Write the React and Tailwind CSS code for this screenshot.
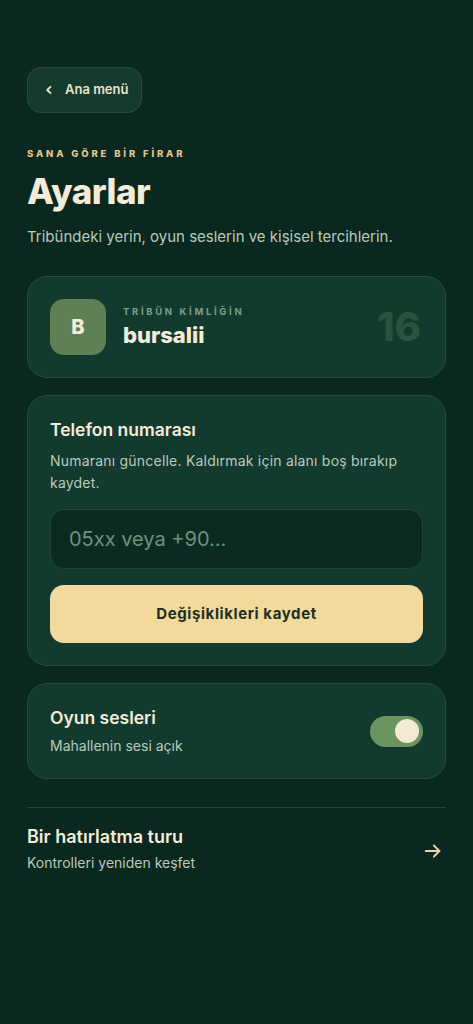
import React from "react";

export default function App() {
  return (
    <div className="min-h-[1024px] w-full bg-[#0a2820] px-[27px] pt-[67px] pb-10" style={{ fontFamily: "Inter, 'Noto Sans', sans-serif" }}>
      <button className="flex h-[46px] w-[115px] items-center gap-[11px] rounded-[14px] border border-[#2a4c3e] bg-[#153a2e] pl-[16px] text-[13px] font-semibold text-[#e9e2c8]">
        <svg width="10" height="10" viewBox="0 0 10 10" fill="none" stroke="#e9e2c8" strokeWidth="1.8" strokeLinecap="round" strokeLinejoin="round">
          <path d="M6.5 1.8 L3.2 5 L6.5 8.2" />
        </svg>
        Ana menü
      </button>

      <div className="mt-[34px] text-[9.5px] font-extrabold tracking-[0.3em] text-[#e3c688]">SANA GÖRE BİR FİRAR</div>
      <h1 className="mt-[8px] text-[35px] font-extrabold leading-[44px] tracking-[-0.015em] text-[#f3ecd9]">Ayarlar</h1>
      <p className="mt-[14px] text-[15px] leading-[20px] text-[#b9cabb]">Tribündeki yerin, oyun seslerin ve kişisel tercihlerin.</p>

      <div className="mt-[29px] flex h-[102px] items-center rounded-[20px] border border-[#2a4c3e] bg-[#133a2e] pl-[22px] pr-[24px]">
        <div className="flex h-[56px] w-[56px] items-center justify-center rounded-[14px] bg-[#5f7f55] text-[20px] font-extrabold text-[#f3ecd9]">B</div>
        <div className="ml-[17px] flex-1">
          <div className="text-[9.5px] font-bold tracking-[0.28em] text-[#7d9e89]">TRİBÜN KİMLİĞİN</div>
          <div className="mt-[2px] text-[22px] font-extrabold leading-[28px] text-[#f3ecd9]">bursalii</div>
        </div>
        <div className="text-[40px] font-extrabold text-[#2b5140]">16</div>
      </div>

      <div className="mt-[17px] rounded-[20px] border border-[#2a4c3e] bg-[#133a2e] px-[22px] pt-[22px] pb-[22px]">
        <div className="text-[17.5px] font-semibold leading-[24px] text-[#f3ecd9]">Telefon numarası</div>
        <p className="mt-[8px] text-[14px] leading-[22px] tracking-[0.015em] text-[#b9cabb]">Numaranı güncelle. Kaldırmak için alanı boş bırakıp kaydet.</p>
        <div className="mt-[15px] flex h-[60px] items-center rounded-[14px] border border-[#214536] bg-[#0b2b22] px-[18px] text-[20px] text-[#6f917e]">05xx veya +90...</div>
        <button className="mt-[16px] flex h-[58px] w-full items-center justify-center rounded-[14px] bg-[#f2d99c] text-[15px] font-bold tracking-[0.04em] text-[#1c2f24]">Değişiklikleri kaydet</button>
      </div>

      <div className="mt-[17px] flex h-[96px] items-center rounded-[20px] border border-[#2a4c3e] bg-[#133a2e] pl-[22px] pr-[22px]">
        <div className="flex-1">
          <div className="text-[17.5px] font-semibold leading-[24px] text-[#f3ecd9]">Oyun sesleri</div>
          <div className="mt-[5px] text-[14px] text-[#b9cabb]">Mahallenin sesi açık</div>
        </div>
        <div className="flex h-[31px] w-[53px] items-center justify-end rounded-full bg-[#6b9460] pr-[4px]">
          <div className="h-[24px] w-[24px] rounded-full bg-[#f3ead4]" />
        </div>
      </div>

      <div className="mt-[28px] border-t border-[#244536]" />
      <div className="mt-[17px] flex items-center">
        <div className="flex-1">
          <div className="text-[18px] font-semibold leading-[24px] text-[#f3ecd9]">Bir hatırlatma turu</div>
          <div className="mt-[3px] text-[14px] text-[#b9cabb]">Kontrolleri yeniden keşfet</div>
        </div>
        <svg width="22" height="22" viewBox="0 0 24 24" fill="none" stroke="#ecd7a3" strokeWidth="2" strokeLinecap="round" strokeLinejoin="round" className="mr-[2px] mt-[4px]">
          <path d="M4 12h15" />
          <path d="M13 6l6 6-6 6" />
        </svg>
      </div>
    </div>
  );
}
